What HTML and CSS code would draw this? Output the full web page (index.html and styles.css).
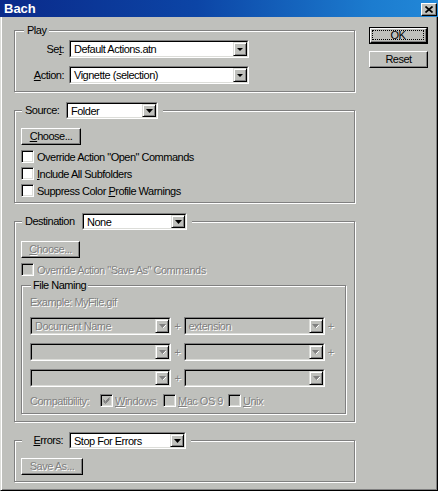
FILE: index.html
```html
<!DOCTYPE html>
<html>
<head>
<meta charset="utf-8">
<title>Batch</title>
<link rel="stylesheet" href="styles.css">
</head>
<body>
<div class="window">
  <div class="titlebar">
    <span class="title">Bach</span>
    <span class="close"><svg width="8" height="7" viewBox="0 0 8 7"><path d="M0.5 0.5L7.5 6.5M7.5 0.5L0.5 6.5" stroke="#000" stroke-width="1.7" fill="none"/></svg></span>
  </div>
  <div class="client">
    <div class="main">
      <fieldset class="group play">
        <legend class="legend-text">Play</legend>
        <div class="play-grid">
          <span class="plabel">Se<u>t</u>:</span>
          <div class="combo h18 w180"><div class="field"><span class="value">Default Actions.atn</span><span class="drop"><svg width="6" height="3" viewBox="0 0 6 3"><path d="M0 0H6L3 3Z" fill="#000"/></svg></span></div></div>
          <span class="plabel"><u>A</u>ction:</span>
          <div class="combo h18 w180"><div class="field"><span class="value">Vignette (selection)</span><span class="drop"><svg width="6" height="3" viewBox="0 0 6 3"><path d="M0 0H6L3 3Z" fill="#000"/></svg></span></div></div>
        </div>
      </fieldset>

      <fieldset class="group">
        <legend class="legend-combo">
          <div class="legend-row">
            <span class="lbl lbl-src">Source:</span>
            <div class="combo h17 w92"><div class="field"><span class="value">Folder</span><span class="drop"><svg width="7" height="4" viewBox="0 0 7 4"><path d="M0 0H7L3.5 4Z" fill="#000"/></svg></span></div></div>
          </div>
        </legend>
        <div class="body src-body">
          <div class="btn w60"><u>C</u>hoose...</div>
          <div class="chk-row first"><span class="cb"></span><span>Override Action "Open" Commands</span></div>
          <div class="chk-row"><span class="cb"></span><span><u>I</u>nclude All Subfolders</span></div>
          <div class="chk-row"><span class="cb"></span><span>Suppress Color <u>P</u>rofile Warnings</span></div>
        </div>
      </fieldset>

      <fieldset class="group">
        <legend class="legend-combo">
          <div class="legend-row">
            <span class="lbl lbl-dst">Destination</span>
            <div class="combo h17 w105"><div class="field"><span class="value">None</span><span class="drop"><svg width="7" height="4" viewBox="0 0 7 4"><path d="M0 0H7L3.5 4Z" fill="#000"/></svg></span></div></div>
          </div>
        </legend>
        <div class="body dst-body">
          <div class="btn w59 dis"><u>C</u>hoose...</div>
          <div class="chk-row first"><span class="cb off"></span><span class="dis">Override Action "Save As" Commands</span></div>
          <fieldset class="group inner">
            <legend class="legend-inner">File Naming</legend>
            <div class="inner-body">
              <div class="example dis">Example: MyFile.gif</div>
              <div class="name-row first">
                <div class="combo h18 w141 off"><div class="field"><span class="value dis">Document Name</span><span class="drop"><svg width="7" height="5" viewBox="0 0 7 5"><path d="M0 0H7L3.5 4Z" fill="#808080"/><path d="M4 4L7 1" stroke="#fff" stroke-width="1" fill="none"/></svg></span></div></div>
                <span class="plus dis">+</span>
                <div class="combo h18 w141 off"><div class="field"><span class="value dis">extension</span><span class="drop"><svg width="7" height="5" viewBox="0 0 7 5"><path d="M0 0H7L3.5 4Z" fill="#808080"/><path d="M4 4L7 1" stroke="#fff" stroke-width="1" fill="none"/></svg></span></div></div>
                <span class="plus dis">+</span>
              </div>
              <div class="name-row">
                <div class="combo h18 w141 off"><div class="field"><span class="value"></span><span class="drop"><svg width="7" height="5" viewBox="0 0 7 5"><path d="M0 0H7L3.5 4Z" fill="#808080"/><path d="M4 4L7 1" stroke="#fff" stroke-width="1" fill="none"/></svg></span></div></div>
                <span class="plus dis">+</span>
                <div class="combo h18 w141 off"><div class="field"><span class="value"></span><span class="drop"><svg width="7" height="5" viewBox="0 0 7 5"><path d="M0 0H7L3.5 4Z" fill="#808080"/><path d="M4 4L7 1" stroke="#fff" stroke-width="1" fill="none"/></svg></span></div></div>
                <span class="plus dis">+</span>
              </div>
              <div class="name-row">
                <div class="combo h18 w141 off"><div class="field"><span class="value"></span><span class="drop"><svg width="7" height="5" viewBox="0 0 7 5"><path d="M0 0H7L3.5 4Z" fill="#808080"/><path d="M4 4L7 1" stroke="#fff" stroke-width="1" fill="none"/></svg></span></div></div>
                <span class="plus dis">+</span>
                <div class="combo h18 w141 off"><div class="field"><span class="value"></span><span class="drop"><svg width="7" height="5" viewBox="0 0 7 5"><path d="M0 0H7L3.5 4Z" fill="#808080"/><path d="M4 4L7 1" stroke="#fff" stroke-width="1" fill="none"/></svg></span></div></div>
              </div>
              <div class="compat">
                <span class="compat-label dis">Compatibility:</span>
                <span class="opt opt-win"><span class="cb off"><svg width="9" height="9" viewBox="0 0 9 9"><path d="M1.5 3.5L3.5 5.5L7.5 1.5M1.5 4.5L3.5 6.5L7.5 2.5M1.5 5.5L3.5 7.5L7.5 3.5" stroke="#808080" stroke-width="1" fill="none"/></svg></span><span class="dis"><u>W</u>indows</span></span>
                <span class="opt opt-mac"><span class="cb off"></span><span class="dis"><u>M</u>ac OS 9</span></span>
                <span class="opt"><span class="cb off"></span><span class="dis"><u>U</u>nix</span></span>
              </div>
            </div>
          </fieldset>
        </div>
      </fieldset>

      <fieldset class="group">
        <legend class="legend-combo">
          <div class="legend-row">
            <span class="lbl lbl-err"><u>E</u>rrors:</span>
            <div class="combo h17 w117"><div class="field"><span class="value">Stop For Errors</span><span class="drop"><svg width="7" height="4" viewBox="0 0 7 4"><path d="M0 0H7L3.5 4Z" fill="#000"/></svg></span></div></div>
          </div>
        </legend>
        <div class="body err-body">
          <div class="btn w62 dis">Save As...</div>
        </div>
      </fieldset>
    </div>

    <div class="side">
      <div class="btn default"><div class="face"><span class="focus">OK</span></div></div>
      <div class="btn">Reset</div>
    </div>
  </div>
</div>
</body>
</html>
```

FILE: styles.css
```css
html, body {
  margin: 0;
  padding: 0;
  background: #bfc0bc;
}

body {
  font-family: "Liberation Sans", Arial, sans-serif;
  font-size: 11px;
  letter-spacing: -0.5px;
  color: #000;
}

u {
  text-decoration: underline;
  text-underline-offset: 1px;
}

.window {
  width: 438px;
  height: 491px;
  display: flex;
  flex-direction: column;
  overflow: hidden;
}

.titlebar {
  height: 17px;
  flex: none;
  box-sizing: border-box;
  padding: 0 1px 0 4px;
  display: flex;
  justify-content: space-between;
  align-items: flex-start;
  background: linear-gradient(90deg, #0a2a8a 0%, #0c45a6 45%, #1c7ccf 85%, #2288d8 100%);
}

.title {
  color: #fff;
  font-weight: bold;
  font-size: 13px;
  line-height: 17px;
  letter-spacing: 0;
}

.close {
  width: 16px;
  height: 13px;
  margin-top: 3px;
  box-sizing: border-box;
  border: 1px solid;
  border-color: #fff #000 #000 #fff;
  box-shadow: inset -1px -1px #808080;
  background: #bfc0bc;
  display: flex;
  align-items: center;
  justify-content: center;
}

.close svg { display: block; }

.client {
  flex: 1;
  display: flex;
  align-items: flex-start;
  border-left: 1px solid #dcddd9;
  border-right: 1px solid #000;
  border-bottom: 1px solid #000;
  box-shadow: inset 1px 0 #fff, inset -1px -1px #808080;
}

.main {
  width: 341px;
  flex: none;
  margin-left: 13px;
  padding-top: 7px;
}

.side {
  width: 59px;
  flex: none;
  margin-left: 14px;
  padding-top: 10px;
  display: flex;
  flex-direction: column;
  gap: 7px;
}

/* group boxes */
.group {
  margin: 10px 0 0;
  padding: 0 6px;
  border: 1px solid #808080;
  box-shadow: inset 1px 1px #fff, 1px 1px #fff;
  min-inline-size: 0;
}

.group.play { margin-top: 0; }

.legend-text {
  margin-left: 3px;
  padding: 0 3px;
  line-height: 13px;
  background: #bfc0bc;
}

.legend-combo {
  margin-left: 1px;
  padding: 0 5px 0 3px;
  background: #bfc0bc;
}

.legend-row {
  display: flex;
  align-items: center;
}

.lbl { line-height: 13px; }
.lbl-src { width: 41px; }
.lbl-dst { width: 57px; }
.lbl-err { width: 44px; box-sizing: border-box; padding-right: 6px; text-align: right; }

.play-grid {
  display: grid;
  grid-template-columns: 43px 180px;
  column-gap: 5px;
  row-gap: 8px;
  align-items: center;
  padding: 3px 0 7px;
}

.plabel { text-align: right; line-height: 13px; }

/* combo boxes */
.combo {
  box-sizing: border-box;
  border: 1px solid;
  border-color: #808080 #fff #fff #808080;
  background: #fff;
  flex: none;
}

.combo.off { background: #bfc0bc; }

.h17 { height: 17px; }
.h18 { height: 18px; }
.w92 { width: 92px; }
.w105 { width: 105px; }
.w117 { width: 117px; }
.w141 { width: 141px; }
.w180 { width: 180px; }

.field {
  height: 100%;
  box-sizing: border-box;
  border: 1px solid;
  border-color: #000 #dcddd9 #dcddd9 #000;
  display: flex;
}

.value {
  flex: 1;
  min-width: 0;
  padding-left: 3px;
  white-space: nowrap;
  overflow: hidden;
  display: flex;
  align-items: center;
}

.drop {
  width: 14px;
  flex: none;
  box-sizing: border-box;
  border: 1px solid;
  border-color: #dcddd9 #000 #000 #dcddd9;
  box-shadow: inset 1px 1px #fff, inset -1px -1px #808080;
  background: #bfc0bc;
  display: flex;
  align-items: center;
  justify-content: center;
}

.drop svg { display: block; }

/* buttons */
.btn {
  height: 17px;
  box-sizing: border-box;
  border: 1px solid;
  border-color: #fff #000 #000 #fff;
  box-shadow: inset -1px -1px #808080;
  background: #bfc0bc;
  text-align: center;
  line-height: 14px;
}

.w59 { width: 59px; }
.w60 { width: 60px; }
.w62 { width: 62px; }

.btn.default {
  border-color: #000;
  box-shadow: none;
}

.face {
  height: 100%;
  box-sizing: border-box;
  border: 1px solid;
  border-color: #fff #000 #000 #fff;
  box-shadow: inset -1px -1px #808080;
  padding: 1px 2px 2px 1px;
}

.focus {
  display: block;
  height: 100%;
  box-sizing: border-box;
  border: 1px dotted #000;
  line-height: 8px;
  text-align: center;
}

/* checkboxes */
.cb {
  width: 13px;
  height: 13px;
  flex: none;
  box-sizing: border-box;
  border: 1px solid;
  border-color: #808080 #fff #fff #808080;
  box-shadow: inset 1px 1px #000, inset -1px -1px #dcddd9;
  background: #fff;
  margin-right: 3px;
  display: flex;
  align-items: center;
  justify-content: center;
}

.cb.off { background: #bfc0bc; }
.cb svg { display: block; }

.chk-row {
  height: 17px;
  display: flex;
  align-items: center;
}

.chk-row.first { margin-top: 3px; }

.dis {
  color: #808080;
  text-shadow: 1px 1px 0 #fff;
}

.src-body { padding: 9px 0 3px; }
.dst-body { padding: 11px 0 7px; }
.err-body { padding: 9px 0 6px; }

/* file naming */
.group.inner {
  margin: 1px 2px 0 0;
  padding: 0 8px;
}

.legend-inner {
  margin-left: 1px;
  padding: 0 2px;
  line-height: 13px;
  background: #bfc0bc;
}

.inner-body { padding: 4px 0 6px; }

.example { line-height: 13px; }

.name-row {
  display: flex;
  align-items: center;
  margin-top: 8px;
}

.plus {
  width: 13px;
  text-align: center;
  line-height: 13px;
}

.compat {
  display: flex;
  align-items: center;
  height: 13px;
  margin-top: 7px;
}

.compat-label { width: 70px; flex: none; }

.opt {
  display: flex;
  align-items: center;
  flex: none;
}

.opt .cb { margin-right: 2px; }
.opt-win { width: 63px; }
.opt-mac { width: 65px; }
```
